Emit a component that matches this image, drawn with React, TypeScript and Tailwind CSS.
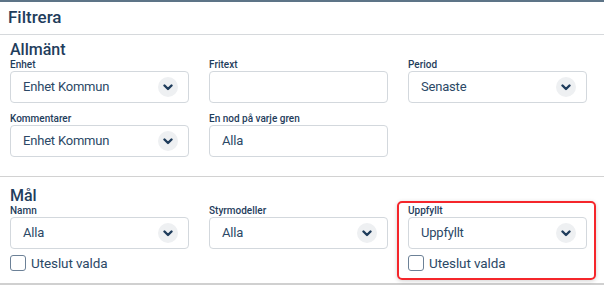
import React from "react";

const navy = "text-[#1f3d5c]";

function Chevron() {
  return (
    <span className="flex h-5 w-5 items-center justify-center rounded-full bg-[#eef0f2]">
      <svg width="10" height="7" viewBox="0 0 10 7" fill="none">
        <path
          d="M1.5 1.5 L5 5 L8.5 1.5"
          stroke="#1f3d5c"
          strokeWidth="2.4"
          strokeLinecap="round"
          strokeLinejoin="round"
        />
      </svg>
    </span>
  );
}

function Field({
  label,
  value,
  select = true,
}: {
  label: string;
  value?: string;
  select?: boolean;
}) {
  return (
    <div>
      <div className={`h-[12px] text-[10px] leading-[12px] font-medium ${navy}`}>
        {label}
      </div>
      <div className="flex h-[32px] items-center justify-between rounded-[4px] border border-[#d3d8dd] bg-white pl-[12px] pr-[10px]">
        <span className="text-[13px] tracking-[-0.2px] text-[#2b4866]">{value}</span>
        {select && <Chevron />}
      </div>
    </div>
  );
}

function Exclude() {
  return (
    <label className="mt-[6px] flex items-center gap-[5px]">
      <span className="h-[16px] w-[16px] rounded-[3px] border-[1.5px] border-[#6c8197] bg-white" />
      <span className="text-[13.5px] leading-[16px] tracking-[-0.1px] text-[#2b4866]">
        Uteslut valda
      </span>
    </label>
  );
}

export default function App() {
  return (
    <div
      className="h-[289px] w-[604px] overflow-hidden bg-white"
      style={{ fontFamily: "Roboto, 'Liberation Sans', sans-serif" }}
    >
      <div className="h-[2px] bg-[#5d7487]" />
      <div className="flex h-[33px] items-center border-b border-[#d6d9dc] px-[8px]">
        <h1 className={`text-[17px] font-medium ${navy}`}>Filtrera</h1>
      </div>

      <section className="px-[10px] pt-[6px] pb-[19px]">
        <h2 className={`text-[16px] leading-[18px] font-medium ${navy}`}>Allmänt</h2>
        <div className="grid grid-cols-[179px_179px_179px] gap-x-[20px] gap-y-[10px]">
          <Field label="Enhet" value="Enhet Kommun" />
          <Field label="Fritext" select={false} />
          <Field label="Period" value="Senaste" />
          <Field label="Kommentarer" value="Enhet Kommun" />
          <Field label="En nod på varje gren" value="Alla" select={false} />
        </div>
      </section>

      <div className="h-px bg-[#d2d2d2]" />

      <section className="px-[10px] pt-[10px] pb-[12px]">
        <h2 className={`text-[16px] leading-[18px] font-medium ${navy}`}>Mål</h2>
        <div className="grid grid-cols-[179px_179px_179px] gap-x-[20px]">
          <div>
            <Field label="Namn" value="Alla" />
            <Exclude />
          </div>
          <Field label="Styrmodeller" value="Alla" />
          <div className="relative">
            <div className="absolute -top-[4px] -left-[11px] -right-[9px] -bottom-[9px] rounded-[5px] border-2 border-[#f5262b] shadow-[0_1px_4px_rgba(0,0,0,0.18)]" />
            <div className="relative">
              <Field label="Uppfyllt" value="Uppfyllt" />
              <Exclude />
            </div>
          </div>
        </div>
      </section>

      <div className="h-[2px] bg-[#d0d0d0]" />
    </div>
  );
}
